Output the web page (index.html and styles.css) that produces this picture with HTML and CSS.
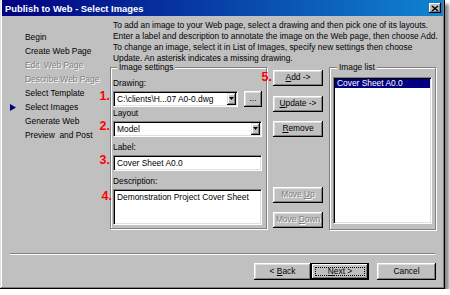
FILE: index.html
```html
<!DOCTYPE html>
<html lang="en">
<head>
	<meta charset="UTF-8">
	<title>Publish to Web - Select Images</title>
	<link rel="stylesheet" href="styles.css">
</head>
<body>
	<div class="window">
		<div class="titlebar">
			<span class="title">Publish to Web - Select Images</span>
			<button class="close"><svg width="8" height="7" viewBox="0 0 8 7"><path d="M1 1L7 6M7 1L1 6" stroke="#000" stroke-width="1.5"/></svg></button>
		</div>

		<div class="content">
			<ul class="steps">
				<li><span class="mark"></span>Begin</li>
				<li><span class="mark"></span>Create Web Page</li>
				<li class="disabled"><span class="mark"></span>Edit&nbsp; Web Page</li>
				<li class="disabled"><span class="mark"></span>Describe Web Page</li>
				<li><span class="mark"></span>Select Template</li>
				<li class="current"><span class="mark"><svg width="6" height="7" viewBox="0 0 6 7"><path d="M0 0L6 3.5L0 7Z" fill="#000080"/></svg></span>Select Images</li>
				<li><span class="mark"></span>Generate Web</li>
				<li><span class="mark"></span>Preview&nbsp; and Post</li>
			</ul>

			<div class="main">
				<p class="intro">To add an image to your Web page, select a drawing and then pick one of its layouts.<br>Enter a label and description to annotate the image on the Web page, then choose Add.<br>To change an image, select it in List of Images, specify new settings then choose<br>Update. An asterisk indicates a missing drawing.</p>

				<div class="panels">
					<fieldset class="group settings">
						<legend>Image settings</legend>

						<div class="field-label first">Drawing:</div>
						<div class="field">
							<span class="num">1.</span>
							<div class="combo short">
								<span class="combo-text">C:\clients\H...07 A0-0.dwg</span>
								<span class="drop"><svg width="5" height="3" viewBox="0 0 5 3"><path d="M0 0H5L2.5 3Z" fill="#000"/></svg></span>
							</div>
							<button class="btn browse">...</button>
						</div>

						<div class="field-label tight">Layout</div>
						<div class="field">
							<span class="num">2.</span>
							<div class="combo">
								<span class="combo-text">Model</span>
								<span class="drop"><svg width="5" height="3" viewBox="0 0 5 3"><path d="M0 0H5L2.5 3Z" fill="#000"/></svg></span>
							</div>
						</div>

						<div class="field-label">Label:</div>
						<div class="field">
							<span class="num">3.</span>
							<div class="textbox">Cover Sheet A0.0</div>
						</div>

						<div class="field-label">Description:</div>
						<div class="field">
							<span class="num num-low">4.</span>
							<div class="textbox area">Demonstration Project Cover Sheet</div>
						</div>
					</fieldset>

					<div class="actions">
						<div class="field">
							<span class="num num-low">5.</span>
							<button class="btn"><u>A</u>dd -&gt;</button>
						</div>
						<button class="btn update"><u>U</u>pdate -&gt;</button>
						<button class="btn remove"><u>R</u>emove</button>
						<button class="btn off move-up">Move <u>U</u>p</button>
						<button class="btn off move-down">Move <u>D</u>own</button>
					</div>

					<fieldset class="group list">
						<legend>Image list</legend>
						<div class="listbox">
							<div class="list-item selected">Cover Sheet A0.0</div>
						</div>
					</fieldset>
				</div>
			</div>
		</div>

		<div class="footer">
			<div class="sep"></div>
			<div class="nav-buttons">
				<button class="btn wide back">&lt; <u>B</u>ack</button>
				<button class="btn wide next"><u>N</u>ext &gt;</button>
				<button class="btn wide cancel">Cancel</button>
			</div>
		</div>
	</div>
</body>
</html>
```

FILE: styles.css
```css
html, body {
	margin: 0;
	background: #fff;
}
body {
	font: 8.4px/11px "Liberation Sans", Arial, sans-serif;
	color: #000;
}
.window {
	width: 445px;
	height: 289px;
	box-sizing: border-box;
	padding: 0 2px 2px;
	background: #c0c0c0;
	display: flex;
	flex-direction: column;
	box-shadow: inset -1px -1px #000, inset 1px 0 #dfdfdf, inset -2px -2px #808080, inset 2px 0 #fff, 4px 4px 3px rgba(0, 0, 0, 0.45);
}
.titlebar {
	height: 16px;
	flex: none;
	display: flex;
	align-items: center;
	justify-content: space-between;
	padding: 0 2px 0 3px;
	background: linear-gradient(to right, #000080, #1084d0);
}
.title {
	color: #fff;
	font-weight: bold;
	font-size: 9.4px;
}
.close {
	width: 12px;
	height: 10px;
	padding: 0;
	border: none;
	background: #c0c0c0;
	display: flex;
	align-items: center;
	justify-content: center;
	box-shadow: inset -1px -1px #000, inset 1px 1px #fff, inset -2px -2px #808080;
}
.content {
	flex: 1;
	display: flex;
	min-height: 0;
}
.steps {
	list-style: none;
	margin: 0;
	padding: 14px 0 0 8px;
	width: 100px;
	line-height: 14px;
}
.steps li {
	display: flex;
	align-items: center;
}
.mark {
	width: 15px;
	display: flex;
	align-items: center;
}
.steps li.disabled {
	color: #808080;
	text-shadow: 1px 1px #fff;
}
.main {
	flex: 1;
	padding-top: 4px;
}
.intro {
	margin: 0 0 -1px 3px;
	line-height: 11px;
}
.panels {
	display: flex;
	align-items: flex-start;
}
.group {
	margin: 0;
	box-sizing: border-box;
	min-width: 0;
	border: 1px solid #808080;
	box-shadow: inset 1px 1px #fff, 1px 1px #fff;
}
.group legend {
	padding: 0 2px;
	margin-left: 4px;
	line-height: 9px;
	background: #c0c0c0;
}
.settings {
	width: 157px;
	padding: 0 4px 3px 2px;
}
.field-label {
	margin-top: 5px;
}
.field-label.first {
	margin-top: 5.5px;
}
.field-label.tight {
	margin-top: 1px;
}
.field {
	position: relative;
	display: flex;
	margin-top: 2px;
}
.num {
	position: absolute;
	right: 100%;
	top: -0.5px;
	margin-right: 3px;
	color: #f00;
	font: bold 12.5px/12.5px "Liberation Sans", Arial, sans-serif;
}
.num-low {
	top: 1px;
	margin-right: 1px;
}
.combo, .textbox {
	width: 149px;
	height: 16px;
	box-sizing: border-box;
	background: #fff;
	border: 1px solid;
	border-color: #808080 #fff #fff #808080;
	box-shadow: inset 1px 1px #000, inset -1px -1px #dfdfdf;
	padding: 1px;
	display: flex;
}
.combo.short {
	width: 125px;
}
.combo-text, .textbox {
	padding-left: 3px;
	line-height: 12px;
	white-space: nowrap;
}
.combo-text {
	flex: 1;
	padding-left: 2px;
	overflow: hidden;
}
.drop {
	width: 9px;
	background: #c0c0c0;
	display: flex;
	align-items: center;
	justify-content: center;
	box-shadow: inset -1px -1px #000, inset 1px 1px #dfdfdf, inset -2px -2px #808080, inset 2px 2px #fff;
}
.textbox.area {
	height: 36px;
	align-items: flex-start;
}
.btn {
	height: 16px;
	padding: 0;
	border: none;
	background: #c0c0c0;
	color: #000;
	font: inherit;
	box-shadow: inset -1px -1px #000, inset 1px 1px #fff, inset -2px -2px #808080, inset 2px 2px #dfdfdf;
}
.btn.off {
	color: #808080;
	text-shadow: 1px 1px #fff;
}
.browse {
	width: 18px;
	margin-left: 6px;
}
.actions {
	width: 50px;
	margin-left: 6px;
	padding-top: 6.5px;
	display: flex;
	flex-direction: column;
}
.actions .btn {
	width: 50px;
}
.actions .field {
	margin-top: 0;
}
.update {
	margin-top: 10px;
}
.remove {
	margin-top: 9px;
}
.move-up {
	margin-top: 50px;
}
.move-down {
	margin-top: 9px;
}
.list {
	width: 107px;
	margin-left: 6px;
	padding: 0 3px 5px;
}
.listbox {
	margin-top: 4.5px;
	height: 147px;
	box-sizing: border-box;
	background: #fff;
	border: 1px solid;
	border-color: #808080 #fff #fff #808080;
	box-shadow: inset 1px 1px #000, inset -1px -1px #dfdfdf;
	padding: 1px;
}
.list-item {
	padding-left: 2px;
	line-height: 9px;
	height: 9px;
}
.list-item.selected {
	background: #000080;
	color: #fff;
}
.footer {
	flex: none;
	padding: 0 7px 7px 8px;
}
.sep {
	border-top: 1px solid #808080;
	border-bottom: 1px solid #fff;
	margin: 0 1px 8px 0;
}
.nav-buttons {
	display: flex;
	justify-content: flex-end;
}
.btn.wide {
	height: 17px;
}
.back {
	width: 57px;
}
.next {
	width: 58px;
	margin-right: 8px;
	box-shadow: inset 0 0 0 1px #000, inset -2px -2px #000, inset 2px 2px #fff, inset -3px -3px #808080;
	outline: 1px dotted #000;
	outline-offset: -5px;
}
.cancel {
	width: 59px;
}
```
